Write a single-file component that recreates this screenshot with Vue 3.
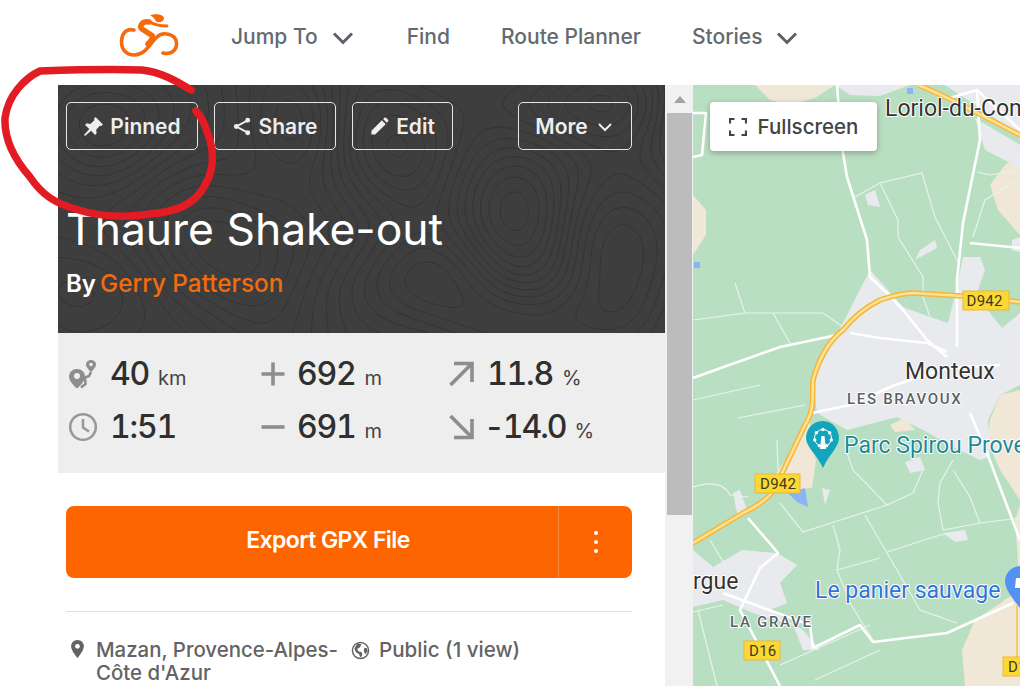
<script setup>
// Topographic background: marching squares over a sum of gaussian hills.
const hills = [
  [342, 62, 85, 75, 1.1], [562, 155, 70, 95, 1.2], [172, 165, 120, 70, -1.0],
  [535, 18, 90, 45, 0.9], [462, 120, 60, 75, -0.9], [60, 40, 80, 60, 0.9],
  [245, 40, 55, 60, -0.8], [40, 200, 70, 60, 0.8], [350, 195, 90, 50, 0.9],
  [470, 240, 80, 40, 0.8], [640, 40, 50, 60, -0.7]
]
const field = (x, y) => {
  let v = 0.09 * Math.sin(x / 37 + y / 53) + 0.07 * Math.cos(x / 23 - y / 41)
  for (const [cx, cy, rx, ry, a] of hills) {
    v += a * Math.exp(-(((x - cx) ** 2) / (rx * rx) + ((y - cy) ** 2) / (ry * ry)))
  }
  return v
}
const step = 6
const levels = []
for (let l = -1.1; l < 1.4; l += 0.14) levels.push(l)
const contours = levels.map((l) => {
  let d = ''
  for (let y = 0; y < 250; y += step) {
    for (let x = 0; x < 610; x += step) {
      const c = [field(x, y), field(x + step, y), field(x + step, y + step), field(x, y + step)]
      const pts = []
      const edge = (a, b, ax, ay, bx, by) => {
        if (a < l !== b < l) {
          const t = (l - a) / (b - a)
          pts.push([ax + (bx - ax) * t, ay + (by - ay) * t])
        }
      }
      edge(c[0], c[1], x, y, x + step, y)
      edge(c[1], c[2], x + step, y, x + step, y + step)
      edge(c[2], c[3], x + step, y + step, x, y + step)
      edge(c[3], c[0], x, y + step, x, y)
      for (let i = 0; i + 1 < pts.length; i += 2) {
        d += `M${pts[i][0].toFixed(1)} ${pts[i][1].toFixed(1)}L${pts[i + 1][0].toFixed(1)} ${pts[i + 1][1].toFixed(1)}`
      }
    }
  }
  return d
})
const whiteRoads = [
  'M837 85L840 125L843 153L847 177L867 240L870 277L887 293L903 310L927 340L947 357',
  'M977 90L980 140L963 223L957 280L957 347',
  'M693 378L780 347L837 335',
  'M850 333L880 338L927 343L947 352',
  'M950 98L977 90L1020 130',
  'M970 243L1020 248',
  'M812 413L850 405L895 385L947 368L1000 365',
  'M970 413L987 453L1020 540',
  'M813 648L860 625L873 642L947 633L1013 603',
  'M748 518L778 553L760 568L740 610L780 686',
  'M723 593L810 625L813 648',
  'M693 113L706 113L702 155L693 157'
]
const thinRoads = [
  'M855 197L880 183L922 173L935 217L958 262',
  'M880 183L898 220V237L923 277V297L930 317',
  'M735 283L745 313L693 320M745 313H823L843 327M773 313L790 343',
  'M977 172L990 175L1020 170M973 237L985 200L1020 178',
  'M693 400L760 385M738 418L805 405',
  'M777 440L778 470M847 453L853 470L887 505L913 493L923 470',
  'M780 503L803 532L887 505',
  'M865 515L887 553L897 570L920 610L957 623',
  'M887 552L940 535L960 533',
  'M833 525L840 550L837 570L850 603L873 640',
  'M837 570L880 558',
  'M953 460L940 483L938 503L943 530L980 523L1020 518',
  'M953 470L970 497L980 523',
  'M710 540L740 590M698 610L717 686M693 612L723 605',
  'M693 487C715 480 725 485 730 495L748 497',
  'M780 665L870 625M815 680L880 650'
]
const yellowMain = 'M693 543L743 513C760 505 770 497 775 488L805 425C815 410 812 395 813 380C820 355 830 340 843 330C855 315 870 305 880 300C895 295 905 293 913 293L963 296L1020 302'
const yellowTop = 'M918 85C945 95 975 112 1020 135'
const dots = [0, 1, 2, 3, 4, 5, 6].map((i) => {
  const a = (i / 7) * Math.PI * 2 - Math.PI / 2
  return { id: i, cx: 823 + Math.cos(a) * 8.5, cy: 438 + Math.sin(a) * 8.5 }
})
</script>

<template>
  <div class="page">
    <header class="nav">
      <svg class="logo" viewBox="118 12 62 46" aria-hidden="true">
        <path class="logo-line" d="M134 30C125 28 121.500 35 121.500 42C121.500 50 127 55 134 55C146 55 150 43 157 37C162 31.500 176 33 176.500 43C177 51 170 55 163 53"/>
        <path class="logo-body" d="M149 22C142 21 139 26 142 29L152 35.500C154 37 151 41 148 44"/>
        <path class="logo-arm" d="M149 21.500C153 24 158 26 167 26"/>
        <path class="logo-fill" d="M150 15.500C154 13.500 163 13.500 164 18C164 22 159 23 156 21.500C155 19 153 16.500 150 15.500Z"/>
      </svg>
      <a class="nav-link nav-drop">Jump To
        <svg class="nav-chev" viewBox="0 0 22 14"><path d="M2 2.500L11 11.500L20 2.500"/></svg>
      </a>
      <a class="nav-link">Find</a>
      <a class="nav-link">Route Planner</a>
      <a class="nav-link nav-drop">Stories
        <svg class="nav-chev" viewBox="0 0 22 14"><path d="M2 2.500L11 11.500L20 2.500"/></svg>
      </a>
    </header>

    <main class="main">
      <section class="side">
        <div class="hero">
          <svg class="topo" viewBox="0 0 607 248" aria-hidden="true">
            <path v-for="(d, i) in contours" :key="i" :d="d"/>
          </svg>
          <div class="actions">
            <button class="btn btn-pinned">
              <svg viewBox="0 0 20 20"><path d="M12 1L19 8L17.500 9.500L16 9.200L12.500 13L13 16.500L11.500 18L7.700 14L2 19L1 18L6 12.300L2 8.500L3.500 7L7 7.500L10.800 4L10.500 2.500Z"/></svg>
              Pinned
            </button>
            <button class="btn btn-share">
              <svg viewBox="0 0 20 20"><circle cx="15.500" cy="3.500" r="2.600"/><circle cx="3.500" cy="10" r="2.600"/><circle cx="15.500" cy="16.500" r="2.600"/><path class="share-line" d="M15.500 3.500L3.500 10L15.500 16.500"/></svg>
              Share
            </button>
            <button class="btn btn-edit">
              <svg viewBox="0 0 20 20"><path d="M1.500 18.500V14.500L12.500 3.500L16.500 7.500L5.500 18.500ZM13.800 2.200L15.200 0.900C15.700 0.400 16.400 0.400 16.900 0.900L19 3C19.500 3.500 19.500 4.200 19 4.700L17.700 6.100Z"/></svg>
              Edit
            </button>
            <button class="btn btn-more">
              More
              <svg class="more-chev" viewBox="0 0 16 10"><path d="M2 2L8 8L14 2"/></svg>
            </button>
          </div>
          <h1 class="title">Thaure Shake-out</h1>
          <p class="by">By <span class="author">Gerry Patterson</span></p>
        </div>

        <div class="stats">
          <div class="stat stat-a">
            <svg class="stat-icon" viewBox="0 0 30 30"><path d="M9 10C4.500 10 1 13.500 1 17.500C1 21.500 5 26 9 29.500C13 26 17 21.500 17 17.500C17 13.500 13.500 10 9 10Z"/><circle class="hole" cx="9" cy="17" r="3"/><path d="M23 1C20 1 18 3.200 18 5.500C18 8 20.500 10.500 23 13C25.500 10.500 28 8 28 5.500C28 3.200 26 1 23 1Z"/><circle class="hole" cx="23" cy="5.500" r="1.800"/><path class="route" d="M23 13L21 17L17 18.500L17.500 25L13 28.500"/></svg>
            <span class="val">40</span><span class="unit">km</span>
          </div>
          <div class="stat stat-b">
            <svg class="stat-icon" viewBox="0 0 30 30"><path d="M15 3.500V26.500M3.500 15H26.500" class="thick"/></svg>
            <span class="val">692</span><span class="unit">m</span>
          </div>
          <div class="stat stat-c">
            <svg class="stat-icon" viewBox="0 0 30 30"><path d="M3.500 26L25 4.500M7 4.500H25V23" class="thick"/></svg>
            <span class="val">11.8</span><span class="unit">%</span>
          </div>
          <div class="stat stat-a">
            <svg class="stat-icon" viewBox="0 0 30 30"><circle class="ring" cx="15" cy="15" r="12.800"/><path class="ring" d="M15 7V15.500L21 19.500"/></svg>
            <span class="val">1:51</span>
          </div>
          <div class="stat stat-b">
            <svg class="stat-icon" viewBox="0 0 30 30"><path d="M3.500 15H26.500" class="thick"/></svg>
            <span class="val">691</span><span class="unit">m</span>
          </div>
          <div class="stat stat-c">
            <svg class="stat-icon" viewBox="0 0 30 30"><path d="M3.500 4L25 25.500M25 7V25.500H7" class="thick"/></svg>
            <span class="val val-neg">-14.0</span><span class="unit">%</span>
          </div>
        </div>

        <div class="body">
          <div class="export">
            <span class="export-main">Export GPX File</span>
            <span class="export-more"><i></i><i></i><i></i></span>
          </div>
          <hr class="rule"/>
          <div class="meta">
            <div class="meta-item meta-loc">
              <svg viewBox="0 0 16 22"><path d="M8 1C3.800 1 1 4.200 1 8C1 12 5 17 8 21C11 17 15 12 15 8C15 4.200 12.200 1 8 1Z"/><circle class="hole2" cx="8" cy="8" r="2.600"/></svg>
              <span>Mazan, Provence-Alpes-Côte d'Azur</span>
            </div>
            <div class="meta-item meta-pub">
              <svg viewBox="0 0 20 20"><circle class="globe" cx="10" cy="10" r="8.500"/><path d="M7 2.500L11 3.500L9.500 6.500L6.500 8.500L8 11L11 11.500L12 14.500L10 17.500L8.500 14L5 11.500L3.500 7.500ZM14 7L17 7.500L17.500 11L15 14L13.500 10.500Z"/></svg>
              <span>Public (1 view)</span>
            </div>
          </div>
        </div>
      </section>

      <div class="scroll">
        <svg class="scroll-up" viewBox="0 0 12 7"><path d="M6 0L12 7H0Z"/></svg>
        <div class="thumb"></div>
      </div>

      <div class="map">
        <svg class="map-art" viewBox="693 85 327 601" aria-hidden="true">
          <rect x="693" y="85" width="327" height="601" fill="#b9dfc2"/>
          <g fill="#f1e7d6">
            <path d="M693 195L706 210L706 235L693 255Z"/>
            <path d="M755 85H835L815 98L790 105L770 100Z"/>
            <path d="M1020 155L1005 165L990 185L998 210L1020 235Z"/>
            <path d="M810 400L806 430L775 475L790 490L812 488L816 460L810 440Z"/>
            <path d="M1020 495V505L1015 520L1020 590L975 620L962 650L965 686H1020Z"/>
            <path d="M1000 395L1020 390V500L1000 470L987 440L990 420Z"/>
            <path d="M890 425L905 418L915 430L895 432Z"/>
          </g>
          <g fill="#e8eaed">
            <path d="M835 85H910L880 96L850 95Z"/>
            <path d="M945 85H1020V135L980 108Z"/>
            <path d="M1020 145L975 118L985 150L1020 168Z"/>
            <path d="M870 270L903 307L930 317L948 323L957 287L963 257L980 257L985 270L977 293L990 313L1002 328L1020 313V385L1000 395L988 420L990 457L980 460L953 447L923 430L897 417L847 430L817 413L813 380L843 323Z"/>
            <path d="M693 550L713 567L742 550L777 553L797 565L780 583L787 603L770 610L803 630L820 650H803L793 625L753 613L723 600L693 607Z"/>
            <path d="M733 493L740 490L747 510L738 518Z"/>
            <path d="M822 488L830 490L825 505Z"/>
            <path d="M905 462L920 457L925 470L910 473Z"/>
            <path d="M943 533L965 530L968 540L955 542Z"/>
            <path d="M865 195L875 190L880 207L868 205ZM920 250L935 240L937 248L915 260Z"/>
            <path d="M1012 240L1020 237V252L1012 250Z"/>
          </g>
          <g fill="#8ab4f8">
            <rect x="907" y="88" width="6" height="6"/>
            <rect x="694" y="262" width="6" height="6"/>
            <path d="M788 493L805 488L808 507L797 502Z"/>
          </g>
          <g class="r-thin"><path v-for="(d, i) in thinRoads" :key="i" :d="d"/></g>
          <g class="r-white"><path v-for="(d, i) in whiteRoads" :key="i" :d="d"/></g>
          <g class="r-yellow">
            <path :d="yellowMain"/>
            <path :d="yellowTop"/>
          </g>
          <g class="r-yellow-in">
            <path :d="yellowMain"/>
            <path :d="yellowTop"/>
          </g>
          <path class="r-side" d="M1017 605V660"/>
          <path d="M823 421C812 421 806 430 806 438C806 447 818 456 823 468C828 456 839 447 839 438C839 430 833 421 823 421Z" fill="#12a5bc"/>
          <circle cx="823" cy="438" r="8.500" fill="none" stroke="#fff" stroke-width="1"/>
          <circle v-for="p in dots" :key="p.id" :cx="p.cx" :cy="p.cy" r="1.700" fill="#fff"/>
          <path d="M821.500 436H824.500L826 449H820Z" fill="#fff"/>
          <path d="M1020 566C1012 566 1005 573 1005 581C1005 590 1014 600 1020 608Z" fill="#5491f5"/>
          <path d="M1016 578H1020V588H1015Z" fill="#fff"/>
          <g class="shield">
            <rect x="963" y="291" width="46" height="19"/><rect x="755" y="474" width="45" height="19"/><rect x="744" y="641" width="36" height="19"/><rect x="1003" y="657" width="20" height="19"/>
          </g>
          <g class="shield-t">
            <text x="966.500" y="306">D942</text><text x="760" y="489">D942</text><text x="749" y="656">D16</text><text x="1008" y="672">D1</text>
          </g>
          <g class="lbl">
            <text class="l-city" x="885" y="116">Loriol-du-Comtat</text>
            <text class="l-city" x="905" y="379">Monteux</text>
            <text class="l-city" x="693" y="589">rgue</text>
            <text class="l-area" x="847" y="404">LES BRAVOUX</text>
            <text class="l-area" x="730" y="627">LA GRAVE</text>
            <text class="l-park" x="844" y="453">Parc Spirou Provence</text>
            <text class="l-shop" x="815" y="598">Le panier sauvage</text>
          </g>
        </svg>
        <button class="full">
          <svg viewBox="0 0 18 18"><path d="M1 5.500V1H5.500M12.500 1H17V5.500M17 12.500V17H12.500M5.500 17H1V12.500"/></svg>
          Fullscreen
        </button>
      </div>
    </main>

    <svg class="scribble" viewBox="0 0 225 225" aria-hidden="true">
      <path d="M191 90C175 80 160 72 142 70C110 69 70 70 40 71C25 78 8 95 5 118C4 140 15 160 30 177C42 195 55 203 75 209C100 217 125 218 150 214C175 212 195 205 205 185C214 170 214 155 210 140C206 128 203 118 196 111"/>
    </svg>
  </div>
</template>

<style>
html, body { margin: 0; padding: 0; background: #fff; }
</style>

<style scoped>
.page {
  position: relative;
  width: 1020px;
  height: 686px;
  overflow: hidden;
  display: flex;
  flex-direction: column;
  font-family: Inter, "Liberation Sans", sans-serif;
  background: #fff;
}
.nav {
  height: 85px;
  flex: none;
  display: flex;
  align-items: center;
  padding-left: 118px;
  box-sizing: border-box;
}
.logo { width: 62px; height: 46px; margin-right: 51px; margin-top: -16px; }
.logo-line { fill: none; stroke: #f56a0a; stroke-width: 3.600; stroke-linecap: round; }
.logo-body { fill: none; stroke: #f56a0a; stroke-width: 5.500; stroke-linecap: round; stroke-linejoin: round; }
.logo-arm { fill: none; stroke: #f56a0a; stroke-width: 2.800; stroke-linecap: round; }
.logo-fill { fill: #f56a0a; }
.nav-link {
  display: flex;
  align-items: center;
  font-size: 21px;
  font-weight: 500;
  color: #636a70;
  margin-right: 51px;
  margin-top: -13px;
}
.nav-drop { margin-right: 53px; }
.nav-chev { width: 22px; height: 14px; margin-left: 14px; margin-top: 4px; }
.nav-chev path { fill: none; stroke: #5b6166; stroke-width: 3; }
.main { flex: 1; display: flex; padding-left: 58px; min-height: 0; }
.side { width: 607px; flex: none; display: flex; flex-direction: column; }
.hero {
  position: relative;
  height: 248px;
  background: #3e3e3e;
  padding: 17px 8px 0;
  box-sizing: border-box;
  overflow: hidden;
  color: #fff;
}
.topo { position: absolute; left: 0; top: 0; width: 607px; height: 248px; }
.topo path { fill: none; stroke: #323232; stroke-width: 0.900; }
.actions { position: relative; display: flex; gap: 16px; height: 48px; }
.btn {
  height: 48px;
  box-sizing: border-box;
  background: transparent;
  border: 1px solid #e6e6e6;
  border-radius: 5px;
  color: #eeeeee;
  font-family: inherit;
  font-size: 21px;
  font-weight: 600;
  display: flex;
  align-items: center;
  justify-content: center;
  padding: 0;
}
.btn svg { fill: #eeeeee; width: 19px; height: 19px; margin-right: 7px; flex: none; }
.btn-pinned { width: 132px; }
.btn-share { width: 122px; }
.btn-edit { width: 101px; }
.btn-more { width: 114px; margin-left: 49px; padding-right: 2px; }
.btn-pinned svg { width: 21px; height: 21px; margin-right: 6px; }
.btn .more-chev { width: 16px; height: 10px; margin: 2px 0 0 9px; fill: none; stroke: #eeeeee; stroke-width: 2; }
.share-line { fill: none; stroke: #eeeeee; stroke-width: 2; }
.title {
  position: relative;
  margin: 49px 0 0;
  font-size: 44.400px;
  font-weight: 400;
  line-height: 60px;
  color: #fff;
}
.by {
  position: relative;
  margin: 8px 0 0;
  font-size: 24px;
  font-weight: 600;
  line-height: 32px;
  color: #fff;
}
.author { color: #f26c0e; font-weight: 500; font-size: 24.300px; margin-left: -2px; }
.stats {
  height: 140px;
  box-sizing: border-box;
  background: #eeeeee;
  padding: 14px 0 0 10px;
  display: grid;
  grid-template-columns: 190px 189px 1fr;
  grid-auto-rows: 53px;
}
.stat { display: flex; align-items: center; color: #2f2f2f; }
.stat-icon { width: 30px; height: 30px; flex: none; fill: #8d8d8d; margin-right: 12px; }
.hole { fill: #eeeeee; }
.route { fill: none; stroke: #8d8d8d; stroke-width: 2.500; }
.ring { fill: none; stroke: #999; stroke-width: 2.600; }
.thick { fill: none; stroke: #8d8d8d; stroke-width: 3.600; }
.stat-b .stat-icon { margin-right: 9px; }
.stat-c .stat-icon { margin-right: 10px; }
.val { font-size: 32px; font-weight: 450; line-height: 40px; font-variant-numeric: tabular-nums; letter-spacing: -1.200px; }
.val-neg { margin-left: -3px; letter-spacing: -2px; }
.unit { font-size: 20px; margin-left: 9px; margin-top: 9px; color: #444; }
.body { flex: 1; padding: 33px 33px 0 8px; background: #fff; }
.export {
  height: 72px;
  background: #fc6500;
  border-radius: 8px;
  display: flex;
  color: #fff;
}
.export-main {
  flex: 1;
  display: flex;
  align-items: center;
  justify-content: center;
  font-size: 23px;
  font-weight: 600;
  letter-spacing: -0.600px;
  padding: 0 0 4px 32px;
  box-sizing: border-box;
  border-right: 1px solid #f98a3f;
}
.export-more {
  width: 73px;
  display: flex;
  flex-direction: column;
  align-items: center;
  justify-content: center;
  gap: 5px;
}
.export-more i { width: 4px; height: 4px; border-radius: 50%; background: #fff; }
.rule { margin: 33px 0 0; border: 0; border-top: 1px solid #e0e0e0; }
.meta { display: flex; margin-top: 26px; color: #636363; font-size: 20.400px; font-weight: 500; line-height: 23px; }
.meta-item { display: flex; }
.meta-item svg { flex: none; fill: #636363; }
.meta-loc { width: 285px; }
.meta-loc svg { width: 15px; height: 20px; margin: 1px 11px 0 4px; }
.meta-pub { font-size: 20.600px; }
.meta-pub svg { width: 19px; height: 19px; margin: 3px 9px 0 0; }
.globe { fill: none; stroke: #636363; stroke-width: 1.500; }
.hole2 { fill: #fff; }
.scroll {
  width: 28px;
  flex: none;
  background: #f1f1f1;
  padding: 0 1px 0 2px;
  box-sizing: border-box;
  position: relative;
}
.scroll-up { display: block; width: 12px; height: 7px; margin: 11px auto 10px; fill: #a3a3a3; }
.thumb { height: 402px; background: #bcbcbc; }
.map { flex: 1; position: relative; overflow: hidden; min-width: 0; }
.map-art { display: block; width: 327px; height: 601px; }
.r-thin path { fill: none; stroke: #e6f3ea; stroke-width: 1.200; }
.r-white path { fill: none; stroke: #fff; stroke-width: 2.600; stroke-linejoin: round; }
.r-yellow path { fill: none; stroke: #f5b63d; stroke-width: 5.500; stroke-linejoin: round; }
.r-yellow-in path { fill: none; stroke: #fde293; stroke-width: 2.500; stroke-linejoin: round; }
.r-side { fill: none; stroke: #f5c04a; stroke-width: 1.500; }
.shield rect { fill: #fdd835; stroke: #e8b93a; stroke-width: 1; }
.shield-t text { font-family: Roboto, sans-serif; font-size: 15px; fill: #3c3c1e; letter-spacing: 0.300px; }
.lbl text { font-family: Roboto, sans-serif; paint-order: stroke; stroke: #fff; stroke-width: 2px; stroke-linejoin: round; }
.l-city { font-size: 23px; fill: #333; }
.l-area { font-size: 15px; font-weight: 500; fill: #5c5f66; letter-spacing: 1.700px; }
.l-park { font-size: 23px; fill: #1f8a96; }
.l-shop { font-size: 23px; fill: #2f74d8; }
.full {
  position: absolute;
  left: 17px;
  top: 17px;
  width: 167px;
  height: 49px;
  background: #fff;
  border: 0;
  border-radius: 4px;
  box-shadow: 0 2px 6px rgba(0, 0, 0, 0.28);
  display: flex;
  align-items: center;
  justify-content: center;
  color: #444;
  font-family: inherit;
  font-size: 20.500px;
  font-weight: 500;
}
.full svg { width: 18px; height: 18px; margin-right: 11px; fill: none; stroke: #444; stroke-width: 2.200; flex: none; }
.scribble {
  position: absolute;
  left: 0;
  top: 0;
  width: 225px;
  height: 225px;
  pointer-events: none;
}
.scribble path { fill: none; stroke: #e31b23; stroke-width: 7.500; stroke-linecap: round; stroke-linejoin: round; }
</style>
